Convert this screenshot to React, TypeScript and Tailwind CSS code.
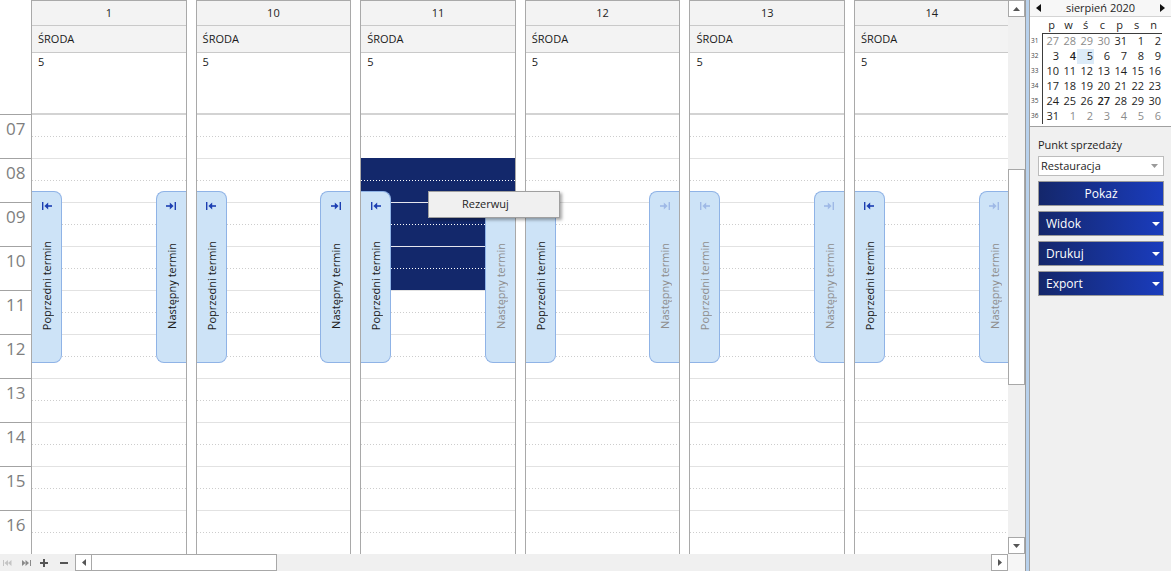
import React from "react";

const days = ["1", "10", "11", "12", "13", "14"];
const tabState: [boolean, boolean][] = [
  [true, true],
  [true, true],
  [true, false],
  [true, false],
  [false, false],
  [true, false],
];
const hours = ["07", "08", "09", "10", "11", "12", "13", "14", "15", "16"];

const Dotted = ({ white = false }: { white?: boolean }) =>
  white ? (
    <div className="h-px bg-[repeating-linear-gradient(to_right,#ffffff_0px,#ffffff_1px,transparent_1px,transparent_3px)]" />
  ) : (
    <div className="h-px bg-[repeating-linear-gradient(to_right,#cdcdcd_0px,#cdcdcd_1px,transparent_1px,transparent_3px)]" />
  );

const ArrowIcon = ({ dir, color }: { dir: "prev" | "next"; color: string }) => (
  <svg width="10" height="8" viewBox="0 0 10 8" style={{ transform: dir === "next" ? "scaleX(-1)" : undefined }}>
    <rect x="0" y="0" width="1.4" height="8" fill={color} />
    <path d="M2.4 4 L6.2 0.6 L6.2 7.4 Z" fill={color} />
    <rect x="5.5" y="3.2" width="4.5" height="1.6" fill={color} />
  </svg>
);

const Tab = ({ side, enabled }: { side: "prev" | "next"; enabled: boolean }) => {
  const text = side === "prev" ? "Poprzedni termin" : "Następny termin";
  const iconColor = enabled ? "#1d3fb2" : "#9fb9e6";
  return (
    <div
      className={
        side === "prev"
          ? "absolute left-0 top-[190px] h-[172px] w-[30px] bg-[#cde3f7] border border-l-0 border-[#8fb3e6] rounded-r-[8px] flex flex-col items-center z-10"
          : "absolute right-0 top-[190px] h-[172px] w-[30px] bg-[#cde3f7] border border-r-0 border-[#8fb3e6] rounded-l-[8px] flex flex-col items-center z-10"
      }
    >
      <div className="pt-[10px] h-[18px] flex items-start">
        <ArrowIcon dir={side} color={iconColor} />
      </div>
      <div className="flex-1 flex items-center justify-center">
        <span
          className={
            enabled
              ? "[writing-mode:vertical-rl] rotate-180 whitespace-nowrap text-[11px] leading-none text-[#1a1a1a]"
              : "[writing-mode:vertical-rl] rotate-180 whitespace-nowrap text-[11px] leading-none text-[#8d8d8d]"
          }
        >
          {text}
        </span>
      </div>
    </div>
  );
};

const DayColumn = ({ label, idx }: { label: string; idx: number }) => (
  <div className="relative w-[155.6px] shrink-0 border-x border-t border-[#a9a9a9] flex flex-col">
    <div className="h-[25px] shrink-0 bg-[#f3f3f3] border-b border-[#c9c9c9] flex items-center justify-center text-[11px] text-[#222]">
      {label}
    </div>
    <div className="h-[27px] shrink-0 bg-[#f3f3f3] border-b border-[#c9c9c9] flex items-center pl-[6px] text-[11px] text-[#1a1a1a]">
      ŚRODA
    </div>
    <div className="h-[60px] shrink-0 pl-[6px] pt-[1px] text-[11px] leading-[15px] text-[#1a1a1a]">5</div>
    <div className="h-[2px] shrink-0 bg-[#d3d3d3]" />
    {hours.map((h) => (
      <div key={h} className="h-[44px] shrink-0 border-b border-[#e2e2e2]">
        <div className="h-[21px]" />
        <Dotted />
      </div>
    ))}
    {idx === 2 && (
      <div className="absolute left-0 right-0 top-[157px] h-[132px] bg-[#13286b]">
        <div className="absolute left-0 right-0 top-[22px]">
          <Dotted white />
        </div>
        <div className="absolute left-0 right-0 top-[44px] h-px bg-[#e6e6ee]" />
        <div className="absolute left-0 right-0 top-[66px]">
          <Dotted white />
        </div>
        <div className="absolute left-0 right-0 top-[88px] h-px bg-[#e6e6ee]" />
        <div className="absolute left-0 right-0 top-[110px]">
          <Dotted white />
        </div>
      </div>
    )}
    <Tab side="prev" enabled={tabState[idx][0]} />
    <Tab side="next" enabled={tabState[idx][1]} />
  </div>
);

type Cell = { d: number; g?: boolean; b?: boolean; s?: boolean };
const calRows: { wk: number; cells: Cell[] }[] = [
  { wk: 31, cells: [{ d: 27, g: true }, { d: 28, g: true }, { d: 29, g: true }, { d: 30, g: true }, { d: 31 }, { d: 1 }, { d: 2 }] },
  { wk: 32, cells: [{ d: 3 }, { d: 4, b: true }, { d: 5, s: true }, { d: 6 }, { d: 7 }, { d: 8 }, { d: 9 }] },
  { wk: 33, cells: [10, 11, 12, 13, 14, 15, 16].map((d) => ({ d })) },
  { wk: 34, cells: [17, 18, 19, 20, 21, 22, 23].map((d) => ({ d })) },
  { wk: 35, cells: [{ d: 24 }, { d: 25 }, { d: 26 }, { d: 27, b: true }, { d: 28 }, { d: 29 }, { d: 30 }] },
  { wk: 36, cells: [{ d: 31 }, { d: 1, g: true }, { d: 2, g: true }, { d: 3, g: true }, { d: 4, g: true }, { d: 5, g: true }, { d: 6, g: true }] },
];

const cellClass = (c: Cell) => {
  if (c.s) return "w-[17px] h-[15px] flex items-center justify-end pr-[1px] bg-[#dcebf8] text-[#1e1e1e]";
  if (c.g) return "w-[17px] h-[15px] flex items-center justify-end pr-[1px] text-[#8b8b8b]";
  if (c.b) return "w-[17px] h-[15px] flex items-center justify-end pr-[1px] text-[#1e1e1e] font-semibold";
  return "w-[17px] h-[15px] flex items-center justify-end pr-[1px] text-[#1e1e1e]";
};

const DownTri = () => (
  <svg width="8" height="4" viewBox="0 0 8 4">
    <path d="M0 0 L8 0 L4 4 Z" fill="#ffffff" />
  </svg>
);

const NavButton = ({ label }: { label: string }) => (
  <div className="mt-[5px] h-[25px] w-[126px] border border-[#9a9a9a] bg-[linear-gradient(to_right,#14276b,#1a3cbd)] flex items-center justify-between pl-[7px] pr-[3px] text-white text-[12px] font-medium">
    <span>{label}</span>
    <DownTri />
  </div>
);

export default function App() {
  return (
    <div className="w-[1171px] h-[571px] flex bg-[#f0f0f0] overflow-hidden font-['Open_Sans',sans-serif] text-[#1e1e1e]">
      {/* scheduler */}
      <div className="w-[1025px] shrink-0 flex flex-col">
        <div className="h-[554px] flex">
          <div className="relative w-[1008px] h-[554px] bg-white overflow-hidden flex">
            <div className="w-[31px] shrink-0 flex flex-col">
              <div className="h-[114px] shrink-0" />
              {hours.map((h) => (
                <div key={h} className="h-[44px] shrink-0 border-t border-[#a3a3a3] pl-[6px] pt-[5px] text-[17px] leading-none text-[#7e7e7e]">
                  {h}
                </div>
              ))}
            </div>
            <div className="flex gap-[9px]">
              {days.map((d, i) => (
                <DayColumn key={d} label={d} idx={i} />
              ))}
            </div>
            {/* context menu */}
            <div className="absolute left-[428px] top-[191px] w-[132px] h-[27px] bg-[#f0f0f0] border border-[#a0a0a0] shadow-[2px_2px_3px_rgba(0,0,0,0.35)] flex items-center pl-[33px] text-[11px] text-[#1e1e1e] z-20">
              Rezerwuj
            </div>
          </div>
          {/* vertical scrollbar */}
          <div className="w-[17px] h-[554px] flex flex-col bg-[#f0f0f0]">
            <div className="h-[17px] shrink-0 border border-[#a8a8a8] bg-white flex items-center justify-center">
              <svg width="7" height="4" viewBox="0 0 7 4">
                <path d="M0 4 L7 4 L3.5 0 Z" fill="#555" />
              </svg>
            </div>
            <div className="h-[152px] shrink-0" />
            <div className="h-[216px] shrink-0 border border-[#a8a8a8] bg-white" />
            <div className="flex-1" />
            <div className="h-[17px] shrink-0 border border-[#a8a8a8] bg-white flex items-center justify-center">
              <svg width="7" height="4" viewBox="0 0 7 4">
                <path d="M0 0 L7 0 L3.5 4 Z" fill="#555" />
              </svg>
            </div>
          </div>
        </div>
        {/* bottom bar */}
        <div className="h-[17px] flex bg-[#f0f0f0]">
          <div className="w-[75px] shrink-0 flex items-center">
            <svg className="ml-[3px]" width="9" height="6" viewBox="0 0 9 6">
              <rect x="0" y="0" width="1" height="6" fill="#c4c4c4" />
              <path d="M1.5 3 L5 0 L5 6 Z" fill="#c4c4c4" />
              <path d="M5 3 L8.5 0 L8.5 6 Z" fill="#c4c4c4" />
            </svg>
            <svg className="ml-[10px]" width="9" height="6" viewBox="0 0 9 6">
              <path d="M0 0 L3.5 3 L0 6 Z" fill="#8a8a8a" />
              <path d="M3.5 0 L7 3 L3.5 6 Z" fill="#8a8a8a" />
              <rect x="8" y="0" width="1" height="6" fill="#8a8a8a" />
            </svg>
            <svg className="ml-[9px]" width="8" height="8" viewBox="0 0 8 8">
              <rect x="0" y="3" width="8" height="2" fill="#555" />
              <rect x="3" y="0" width="2" height="8" fill="#555" />
            </svg>
            <svg className="ml-[12px]" width="8" height="8" viewBox="0 0 8 8">
              <rect x="0" y="3" width="8" height="2" fill="#555" />
            </svg>
          </div>
          <div className="w-[17px] shrink-0 border border-[#a8a8a8] bg-white flex items-center justify-center">
            <svg width="4" height="7" viewBox="0 0 4 7">
              <path d="M4 0 L4 7 L0 3.5 Z" fill="#555" />
            </svg>
          </div>
          <div className="w-[185px] shrink-0 border-y border-r border-[#a8a8a8] bg-white" />
          <div className="flex-1" />
          <div className="w-[17px] shrink-0 border border-[#a8a8a8] bg-white flex items-center justify-center">
            <svg width="4" height="7" viewBox="0 0 4 7">
              <path d="M0 0 L0 7 L4 3.5 Z" fill="#555" />
            </svg>
          </div>
          <div className="w-[17px] shrink-0 bg-[#f6f6f6]" />
        </div>
      </div>
      {/* separator */}
      <div className="w-[4px] shrink-0 border-l border-[#9c9c9c] bg-[#b8d1ec]" />
      {/* right panel */}
      <div className="w-[142px] shrink-0 border-l border-[#a0a0a0] flex flex-col bg-[#f0f0f0]">
        <div className="h-[127px] shrink-0 bg-white border-b border-[#a0a0a0] flex flex-col">
          <div className="h-[17px] shrink-0 bg-[#f7f7f7] border-b border-[#d4d4d4] flex items-center justify-between px-[6px] text-[11px] text-[#1e1e1e]">
            <svg width="5" height="8" viewBox="0 0 5 8">
              <path d="M5 0 L5 8 L0 4 Z" fill="#111" />
            </svg>
            <span>sierpień 2020</span>
            <svg width="5" height="8" viewBox="0 0 5 8">
              <path d="M0 0 L0 8 L5 4 Z" fill="#111" />
            </svg>
          </div>
          <div className="h-[16px] shrink-0 flex pl-[13px] text-[11px] text-[#1e1e1e]">
            {["p", "w", "ś", "c", "p", "s", "n"].map((w, i) => (
              <div key={i} className="w-[17px] flex items-center justify-center">
                {w}
              </div>
            ))}
          </div>
          <div className="flex">
            <div className="w-[12px] shrink-0 flex flex-col">
              {calRows.map((r) => (
                <div key={r.wk} className="h-[15px] flex items-center pl-[1px] text-[6.5px] text-[#444]">
                  {r.wk}
                </div>
              ))}
            </div>
            <div className="w-[120px] border-l border-t border-[#3c3c3c] flex flex-col text-[11px]">
              {calRows.map((r) => (
                <div key={r.wk} className="flex">
                  {r.cells.map((c, i) => (
                    <div key={i} className={cellClass(c)}>
                      {c.d}
                    </div>
                  ))}
                </div>
              ))}
            </div>
          </div>
        </div>
        <div className="pl-[8px] pt-[10px] flex flex-col">
          <div className="h-[15px] leading-[15px] text-[11px] text-[#1e1e1e]">Punkt sprzedaży</div>
          <div className="mt-[4px] h-[20px] w-[126px] bg-white border border-[#bcbcbc] flex items-center justify-between pl-[2px] pr-[5px] text-[11px] text-[#1e1e1e]">
            <span>Restauracja</span>
            <svg width="7" height="4" viewBox="0 0 7 4">
              <path d="M0 0 L7 0 L3.5 4 Z" fill="#9a9a9a" />
            </svg>
          </div>
          <div className="mt-[5px] h-[25px] w-[126px] border border-[#9a9a9a] bg-[linear-gradient(to_right,#14276b,#1a3cbd)] flex items-center justify-center text-white text-[12px] font-medium">
            Pokaż
          </div>
          <NavButton label="Widok" />
          <NavButton label="Drukuj" />
          <NavButton label="Export" />
        </div>
      </div>
    </div>
  );
}
